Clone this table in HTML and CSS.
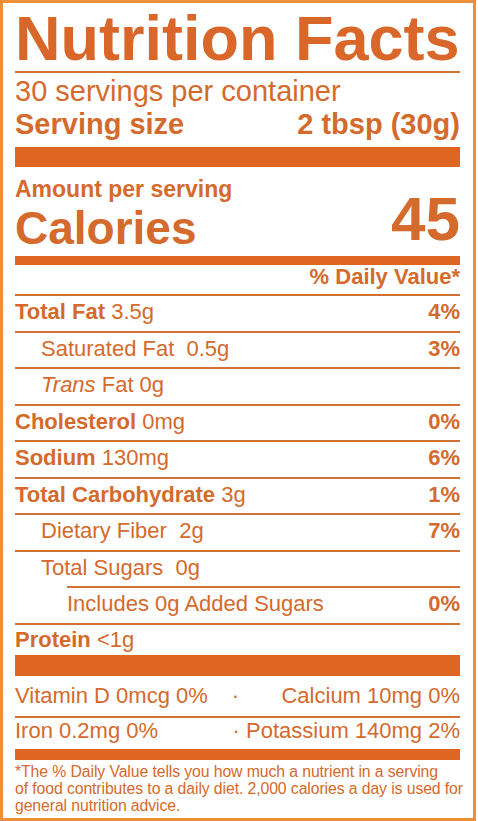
FILE: index.html
```html
<!DOCTYPE html>
<html lang="en">
<head>
    <meta charset="UTF-8">
    <meta name="viewport" content="width=device-width, initial-scale=1.0">
    <title>Nutrition Facts</title>
    <link rel="stylesheet" href="styles.css">
</head>
<body>
    <div class="label">
        <h1 class="label-title">Nutrition Facts</h1>

        <div class="servings">
            <p>30 servings per container</p>
            <p class="serving-size"><span>Serving size</span><span>2 tbsp (30g)</span></p>
        </div>

        <div class="calories">
            <div class="calories-left">
                <p class="amount">Amount per serving</p>
                <p class="calories-name">Calories</p>
            </div>
            <p class="calories-value">45</p>
        </div>

        <div class="dv-head">% Daily Value*</div>

        <div class="row"><span><b>Total Fat</b> 3.5g</span><b>4%</b></div>
        <div class="row sub"><span>Saturated Fat&nbsp; 0.5g</span><b>3%</b></div>
        <div class="row sub"><span><i>Trans</i> Fat 0g</span></div>
        <div class="row"><span><b>Cholesterol</b> 0mg</span><b>0%</b></div>
        <div class="row"><span><b>Sodium</b> 130mg</span><b>6%</b></div>
        <div class="row"><span><b>Total Carbohydrate</b> 3g</span><b>1%</b></div>
        <div class="row sub"><span>Dietary Fiber&nbsp; 2g</span><b>7%</b></div>
        <div class="row sub"><span>Total Sugars&nbsp; 0g</span></div>
        <div class="row sub-2"><span>Includes 0g Added Sugars</span><b>0%</b></div>
        <div class="row protein"><span><b>Protein</b> &lt;1g</span></div>

        <div class="vitamins">
            <div class="vit-row first">
                <span>Vitamin D 0mcg 0%</span>
                <span class="dot">&middot;</span>
                <span class="vit-right">Calcium 10mg 0%</span>
            </div>
            <div class="vit-row">
                <span>Iron 0.2mg 0%</span>
                <span class="vit-right">&middot; Potassium 140mg 2%</span>
            </div>
        </div>

        <p class="footnote">*The % Daily Value tells you how much a nutrient in a serving<br>of food contributes to a daily diet. 2,000 calories a day is used for<br>general nutrition advice.</p>
    </div>
</body>
</html>
```

FILE: styles.css
```css
* {
    margin: 0;
    padding: 0;
    box-sizing: border-box;
}

body {
    background: white;
    font-family: 'Liberation Sans', Arial, sans-serif;
    color: #d46a2c;
}

.label {
    width: 476px;
    min-height: 821px;
    border: 3px solid #ee8f3a;
    padding: 2px 13px 0 12px;
}

.label-title {
    font-size: 63px;
    font-weight: 700;
    line-height: 66px;
    white-space: nowrap;
    color: #d9672a;
    border-bottom: 2px solid #d27036;
}

.servings {
    font-size: 29px;
    line-height: 33px;
    padding: 2px 0 6px;
    border-bottom: 20px solid #de6522;
}

.serving-size {
    display: flex;
    justify-content: space-between;
    font-weight: 700;
}

.calories {
    display: flex;
    justify-content: space-between;
    align-items: flex-end;
    padding-top: 9px;
    margin-bottom: 2px;
    font-weight: 700;
}

.amount {
    font-size: 23px;
    line-height: 26px;
}

.calories-name {
    font-size: 46px;
    line-height: 52px;
}

.calories-value {
    font-size: 62px;
    line-height: 62px;
    margin-bottom: 4.5px;
}

.dv-head {
    border-top: 9px solid #de6522;
    font-size: 22px;
    font-weight: 700;
    line-height: 24px;
    text-align: right;
    padding-bottom: 5px;
}

.row {
    display: flex;
    justify-content: space-between;
    font-size: 22px;
    line-height: 31.5px;
    padding-bottom: 3px;
    border-top: 2px solid #d27036;
}

.row.sub {
    padding-left: 26px;
}

.row.sub-2 {
    margin-left: 52px;
}

.row.protein {
    line-height: 29px;
    padding-bottom: 1px;
    border-bottom: 21px solid #de6522;
}

.vitamins {
    font-size: 22px;
    border-bottom: 11px solid #de6522;
}

.vit-row {
    display: flex;
    line-height: 26px;
    padding-bottom: 5px;
}

.vit-row.first {
    line-height: 30px;
    padding-top: 5px;
    border-bottom: 2px solid #d27036;
}

.dot {
    margin-left: 24px;
}

.vit-right {
    margin-left: auto;
}

.footnote {
    font-size: 15.8px;
    line-height: 17.3px;
    letter-spacing: -0.1px;
    white-space: nowrap;
    padding-top: 3px;
}
```
